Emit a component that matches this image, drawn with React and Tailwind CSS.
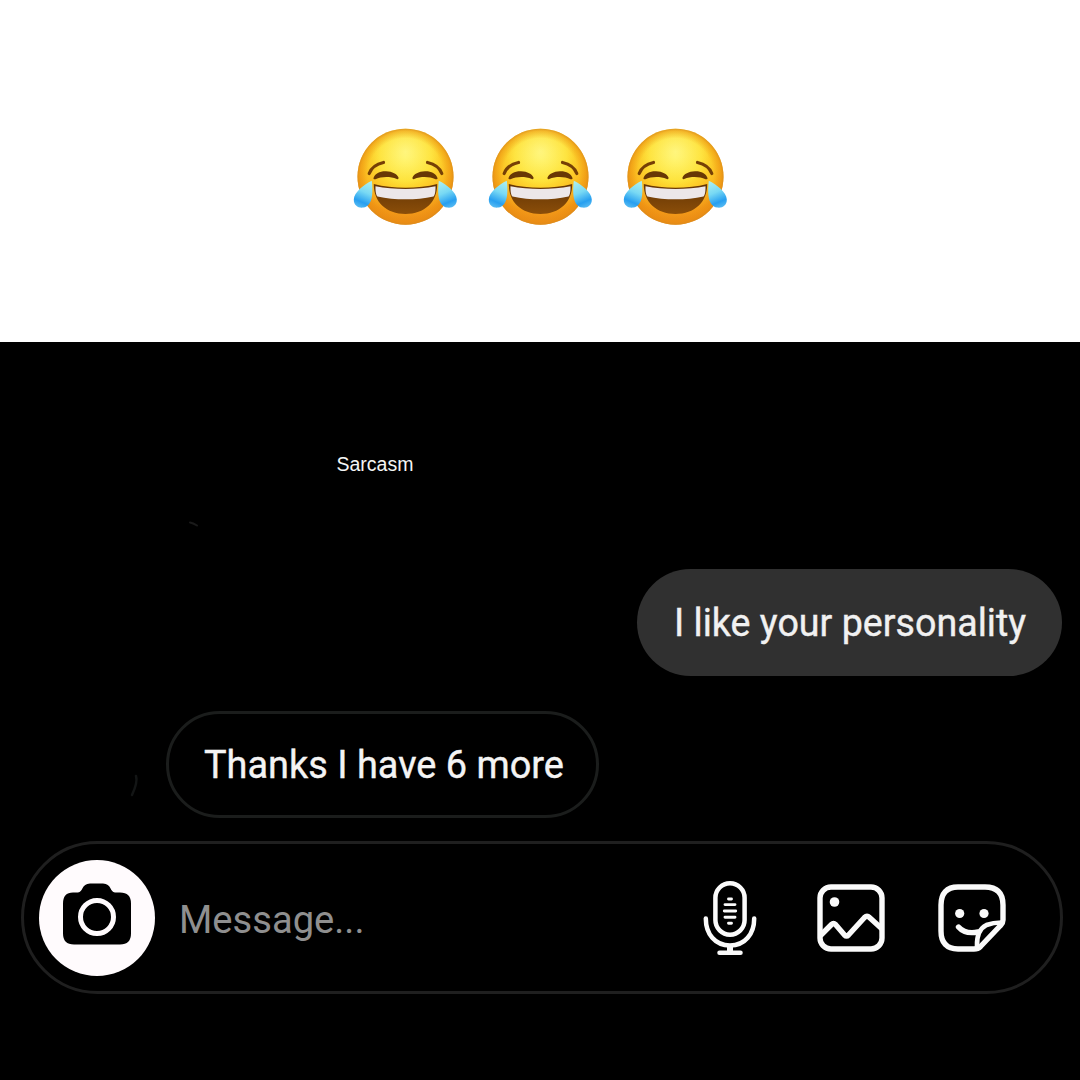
function JoyEmoji({ id }) {
  return (
    <svg className="h-[116px] w-[120px]" viewBox="0 0 120 116">
      <defs>
        <radialGradient id={`${id}-face`} cx="0.5" cy="0.3" r="0.68" gradientTransform="translate(0.5 0) scale(1.1 1) translate(-0.5 0)">
          <stop offset="0" stopColor="#fff050" />
          <stop offset="0.36" stopColor="#fee135" />
          <stop offset="0.6" stopColor="#fbbe22" />
          <stop offset="0.85" stopColor="#f29817" />
          <stop offset="1" stopColor="#ec8f1c" />
        </radialGradient>
        <radialGradient id={`${id}-shine`} cx="0.5" cy="0.24" r="0.36">
          <stop offset="0" stopColor="#fffba0" stopOpacity="0.6" />
          <stop offset="1" stopColor="#fff27a" stopOpacity="0" />
        </radialGradient>
        <radialGradient id={`${id}-rim`} cx="0.5" cy="0.5" r="0.5">
          <stop offset="0.8" stopColor="#e88a0c" stopOpacity="0" />
          <stop offset="0.95" stopColor="#e88a0c" stopOpacity="0.45" />
          <stop offset="1" stopColor="#d98a1c" stopOpacity="0.8" />
        </radialGradient>
        <linearGradient id={`${id}-tear`} x1="0.7" y1="0" x2="0.4" y2="1">
          <stop offset="0" stopColor="#a9eef0" />
          <stop offset="0.42" stopColor="#78d9f4" />
          <stop offset="0.8" stopColor="#279ff0" />
          <stop offset="1" stopColor="#52b8f2" />
        </linearGradient>
        <linearGradient id={`${id}-mouth`} x1="0" y1="0" x2="0" y2="1">
          <stop offset="0" stopColor="#633404" />
          <stop offset="1" stopColor="#8b4e09" />
        </linearGradient>
      </defs>
      <circle cx="60.500" cy="58.700" r="48" fill={`url(#${id}-face)`} />
      <circle cx="60.500" cy="58.700" r="48" fill={`url(#${id}-shine)`} />
      <circle cx="60.500" cy="58.700" r="48" fill={`url(#${id}-rim)`} />
      <g fill="none" stroke="#764006" strokeLinecap="round">
        <path d="M24.200 55.500C26 50.500 30.500 46.300 38.500 44.500" strokeWidth="3.200" />
        <path d="M96.800 55.500C95 50.500 90.500 46.300 82.500 44.500" strokeWidth="3.200" />
      </g>
      <g fill="#683805">
        <path d="M28.500 60C30 55.300 35 53 41 53.200C47.500 53.400 52 56 53.500 59.500C53.800 60.800 52.800 61.600 51.800 61C45 58.300 36.500 58.500 30.500 61.200C29.300 61.600 28.200 61.100 28.500 60Z" />
        <path d="M92.500 60C91 55.300 86 53 80 53.200C73.500 53.400 69 56 67.500 59.500C67.200 60.800 68.200 61.600 69.200 61C76 58.300 84.500 58.500 90.500 61.200C91.700 61.600 92.800 61.100 92.500 60Z" />
      </g>
      <path d="M28.800 66C48 71 73 71 92.200 66C92.500 84 79.500 96 60.500 96C41.500 96 28.500 84 28.800 66Z" fill={`url(#${id}-mouth)`} />
      <path d="M30.500 68.300C49 72 72 72 90.500 68.300C90.700 74 89.700 77.500 88.500 78.500C71 82.300 50 82.300 32.500 78.500C31.300 77.500 30.300 74 30.500 68.300Z" fill="#ece7e9" />
      <path d="M26.800 62.800C19 66.500 9 74.500 8.800 81.500C8.600 87.500 13.500 90.500 18.500 89.600C27.500 88 28.300 76 26.800 62.800Z" fill={`url(#${id}-tear)`} />
      <g transform="translate(120.600 0) scale(-1 1)">
        <path d="M26.800 62.800C19 66.500 9 74.500 8.800 81.500C8.600 87.500 13.500 90.500 18.500 89.600C27.500 88 28.300 76 26.800 62.800Z" fill={`url(#${id}-tear)`} />
      </g>
    </svg>
  );
}

function CameraIcon() {
  return (
    <svg className="mb-[7px] h-[62px] w-[70px]" viewBox="0 0 70 62">
      <path d="M11 9.500H16C21 9.500 19.500 0.500 28 0.500H41C49.500 0.500 48 9.500 53 9.500H58Q69 9.500 69 20.500V50.500Q69 61.500 58 61.500H12Q1 61.500 1 50.500V20.500Q1 9.500 11 9.500Z" fill="#000" />
      <circle cx="35" cy="34" r="16.500" fill="none" stroke="#fffbfd" strokeWidth="5" />
    </svg>
  );
}

function MicIcon() {
  return (
    <svg className="h-[76px] w-[54px]" viewBox="0 0 54 76" fill="none" stroke="#fafafa" strokeWidth="4.500" strokeLinecap="round">
      <rect x="12.400" y="3.200" width="29.200" height="51.500" rx="14.600" />
      <path d="M2.800 38.500C2.800 54 12 65.500 27 65.500C42 65.500 51.200 54 51.200 38.500" />
      <path d="M27 65.500V72.500" strokeWidth="6" strokeLinecap="butt" />
      <path d="M16.500 72.700H37.500" />
      <path d="M25.500 19H28.500M22 24.600H32M21.300 31H32.700M22 37.200H32M25.500 43.200H28.500" strokeWidth="2.900" />
    </svg>
  );
}

function PhotoIcon() {
  return (
    <svg className="h-[68px] w-[68px]" viewBox="0 0 68 68" fill="none" stroke="#fafafa" strokeWidth="5.400" strokeLinecap="round" strokeLinejoin="round">
      <rect x="3" y="3" width="62" height="62" rx="11" />
      <path d="M4 51L14.500 40.500Q16.500 38.500 18.500 40.500L27.500 51Q29.500 53 31.500 51L47.500 33.500Q50 31 52.500 33.500L64 44" />
      <circle cx="17.500" cy="18" r="4.800" fill="#fafafa" stroke="none" />
    </svg>
  );
}

function StickerIcon() {
  return (
    <svg className="h-[68px] w-[68px]" viewBox="0 0 68 68" fill="none" stroke="#fafafa" strokeWidth="5.400" strokeLinecap="round" strokeLinejoin="round">
      <path d="M20 3H47Q65 3 65 21V36Q65 39 62.500 41.500L42.500 62.500Q40 65 36 65H20Q3 65 3 47V21Q3 3 20 3Z" />
      <path d="M63.500 38.500Q55 38.500 48.500 41Q38.500 46 39 62" strokeWidth="4.600" />
      <path d="M20.500 43Q27 50.500 40 48" />
      <circle cx="21.700" cy="29.500" r="4.600" fill="#fafafa" stroke="none" />
      <circle cx="46" cy="29.500" r="4.600" fill="#fafafa" stroke="none" />
    </svg>
  );
}

export default function App() {
  return (
    <div className="flex h-[1080px] w-[1080px] flex-col overflow-hidden bg-black font-['Roboto',sans-serif]">
      <header className="flex h-[342px] shrink-0 justify-center gap-[15px] bg-white pt-[118px]">
        <JoyEmoji id="a" />
        <JoyEmoji id="b" />
        <JoyEmoji id="c" />
      </header>
      <main className="flex flex-col">
        <p className="mt-[110px] ml-[336.5px] h-6 font-['Liberation_Sans',sans-serif] text-[19.5px] leading-6 text-[#f4f4f4]">Sarcasm</p>
        <svg className="mt-[45px] ml-[188px] h-[6px] w-[12px]" viewBox="0 0 12 6">
          <path d="M2 1.500Q5 2 9 4.500" fill="none" stroke="#1a1a1a" strokeWidth="2" strokeLinecap="round" />
        </svg>
        <div className="mt-[42px] mr-[18px] flex h-[107px] w-[425px] items-center self-end rounded-full bg-[#303030] pt-[2px] pl-[37px]">
          <span className="origin-left scale-x-[0.965] whitespace-nowrap text-[39px] leading-none text-[#f1f1f1] [-webkit-text-stroke:0.4px_#f1f1f1]">I like your personality</span>
        </div>
        <div className="mt-[35px] ml-[128px] flex items-center gap-[26px]">
          <svg className="mt-[42px] h-[24px] w-[12px]" viewBox="0 0 12 24">
            <path d="M8 2Q10 8 4 21" fill="none" stroke="#131515" strokeWidth="2.500" strokeLinecap="round" />
          </svg>
          <div className="flex h-[107px] w-[433px] items-center rounded-full border-[3px] border-[#1b1d1c] pt-[2px] pl-[34.5px]">
            <span className="origin-left scale-x-[0.972] whitespace-nowrap text-[39px] leading-none text-[#f4f4f4] [-webkit-text-stroke:0.4px_#f4f4f4]">Thanks I have 6 more</span>
          </div>
        </div>
        <div className="mt-[23px] ml-[21px] flex h-[153px] w-[1042px] items-center rounded-full border-[3px] border-[#1f1f1f] pl-[14.5px]">
          <div className="flex size-[116px] shrink-0 items-center justify-center rounded-full bg-[#fffbfd]">
            <CameraIcon />
          </div>
          <span className="ml-[24px] w-[524px] origin-left scale-x-[0.978] whitespace-nowrap pt-[5px] text-[39px] leading-none text-[#8f8f8f]">Message...</span>
          <div className="flex shrink-0 items-center">
            <MicIcon />
            <div className="ml-[60px] flex gap-[53px]">
              <PhotoIcon />
              <StickerIcon />
            </div>
          </div>
        </div>
      </main>
    </div>
  );
}
